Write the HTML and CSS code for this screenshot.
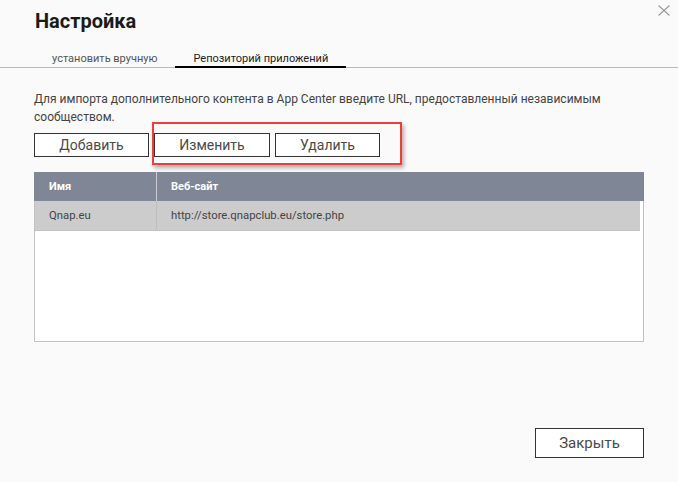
FILE: index.html
```html
<!DOCTYPE html>
<html lang="ru">
<head>
<meta charset="utf-8">
<title>Настройка</title>
<link rel="stylesheet" href="styles.css">
</head>
<body>
<div class="dialog">
  <div class="title">Настройка</div>
  <svg class="close" width="12" height="11" viewBox="0 0 12 11"><path d="M0.5 0.5 L11.5 10.5 M11.5 0.5 L0.5 10.5" stroke="#9a9a9a" stroke-width="1.1" fill="none"/></svg>
  <div class="tabs">
    <div class="tab">установить вручную</div>
    <div class="tab active">Репозиторий приложений</div>
  </div>
  <div class="content">
    <p class="desc">Для импорта дополнительного контента в App Center введите URL, предоставленный независимым сообществом.</p>
    <div class="actions">
      <button class="btn w-add">Добавить</button>
      <button class="btn w-edit">Изменить</button>
      <button class="btn w-del">Удалить</button>
      <div class="highlight"></div>
    </div>
    <div class="table">
      <div class="thead">
        <div class="cell c1">Имя</div>
        <div class="cell c2">Веб-сайт</div>
      </div>
      <div class="row">
        <div class="cell c1">Qnap.eu</div>
        <div class="cell c2">http://store.qnapclub.eu/store.php</div>
      </div>
    </div>
  </div>
  <div class="footer">
    <button class="btn close-btn">Закрыть</button>
  </div>
</div>
</body>
</html>
```
FILE: styles.css
```css
html, body {
  margin: 0;
  padding: 0;
}
body {
  background: #fafafa;
  font-family: Roboto, "Noto Sans", sans-serif;
  color: #333;
}
.dialog {
  position: relative;
  height: 482px;
  display: flex;
  flex-direction: column;
  box-sizing: border-box;
}
.title {
  padding: 9px 0 0 35px;
  font-size: 20px;
  line-height: 24px;
  font-weight: 700;
  color: #1a1a1a;
}
.close {
  position: absolute;
  left: 658px;
  top: 5px;
}
.tabs {
  display: flex;
  margin-top: 15px;
  padding-left: 34px;
  border-bottom: 1px solid #b8b8b8;
}
.tab {
  padding: 4px 18px 1px;
  font-size: 11px;
  line-height: 13px;
  color: #555;
  border-bottom: 2px solid transparent;
  margin-bottom: -1px;
}
.tab.active {
  color: #222;
  border-bottom-color: #000;
}
.content {
  padding: 0 34px;
}
.desc {
  margin: 22px 0 0;
  font-size: 12px;
  line-height: 18px;
  color: #444;
}
.actions {
  position: relative;
  display: flex;
  gap: 5px;
  margin-top: 7px;
}
.btn {
  height: 24px;
  box-sizing: border-box;
  border: 1px solid #333;
  background: #fff;
  font-family: Roboto, "Noto Sans", sans-serif;
  font-size: 14px;
  color: #4a4a4a;
  padding: 0;
  margin: 0;
}
.w-add { width: 115px; }
.w-edit { width: 116px; }
.w-del { width: 105px; }
.highlight {
  position: absolute;
  left: 118px;
  top: -11px;
  width: 250px;
  height: 43px;
  box-sizing: border-box;
  border: 2px solid #e8403f;
  box-shadow: 2px 3px 4px rgba(0, 0, 0, 0.3);
  pointer-events: none;
}
.table {
  margin-top: 15px;
  height: 170px;
  box-sizing: border-box;
  border: 1px solid #c2c2c2;
  border-top: none;
  background: #fff;
}
.thead {
  display: flex;
  height: 29px;
  margin: 0 -1px;
  background: #7f8797;
  color: #fff;
  font-size: 11px;
  font-weight: 700;
}
.cell {
  display: flex;
  align-items: center;
  padding-left: 14px;
  box-sizing: border-box;
}
.c1 {
  width: 123px;
  border-right: 1px solid #c9ccd3;
}
.thead .c1 { width: 123px; padding-left: 15px; }
.row {
  display: flex;
  height: 29px;
  margin-right: 3px;
  background: #cccccc;
  font-size: 11.3px;
  color: #444;
  border-bottom: 1px dotted #bbb;
}
.row .c1 {
  width: 122px;
  border-right-color: #bdbdbd;
}
.footer {
  margin-top: auto;
  display: flex;
  justify-content: flex-end;
  padding: 0 34px 24px;
}
.close-btn {
  width: 109px;
  height: 30px;
  font-size: 15px;
}
```
